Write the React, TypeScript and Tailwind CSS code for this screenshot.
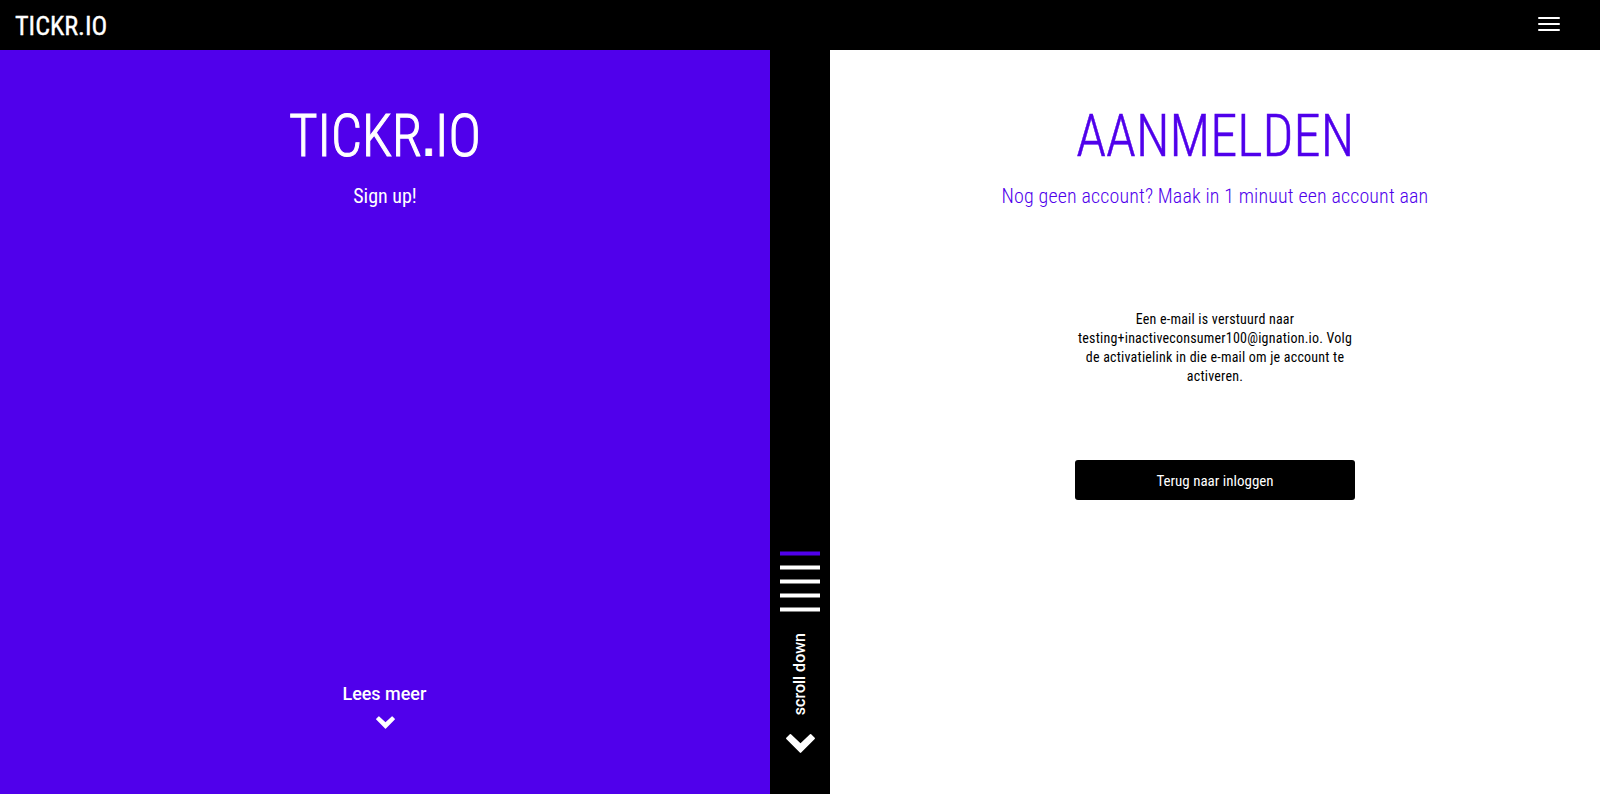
const bars = [11.5, 25.5, 39.5, 53.5, 67.5];

function Chevron({ className }: { className: string }) {
  return (
    <svg viewBox="0 0 29 19" className={className} fill="currentColor" aria-hidden="true">
      <path d="M5 0.3 14.5 9.3 24 0.3Q24.6 -0.2 25.2 0.3L28.7 3.8Q29.2 4.4 28.7 5L15.2 18.6Q14.5 19.2 13.8 18.6L0.3 5Q-0.2 4.4 0.3 3.8L3.8 0.3Q4.4 -0.2 5 0.3Z" />
    </svg>
  );
}

function Header() {
  return (
    <header className="flex h-[50px] shrink-0 items-center justify-between bg-black pr-10 pl-[15px] text-white">
      <a href="#" className="origin-left scale-x-[0.98] pt-[3px] text-[26.7px] leading-none font-normal [-webkit-text-stroke:0.35px_white]">TICKR.IO</a>
      <button aria-label="Menu" className="-mt-[2px] flex h-[14px] w-[22px] flex-col justify-between">
        <span className="h-[2px] w-full rounded-[1px] bg-white" />
        <span className="h-[2px] w-full rounded-[1px] bg-white" />
        <span className="h-[2px] w-full rounded-[1px] bg-white" />
      </button>
    </header>
  );
}

export default function App() {
  return (
    <div className="flex h-[794px] flex-col overflow-hidden font-['Roboto',sans-serif] [font-stretch:75%]">
      <Header />
      <main className="grid min-h-0 flex-1 grid-cols-[1fr_60px_1fr]">
        <section className="flex flex-col items-center bg-[#5000eb] pt-[56px] text-white">
          <h1 className="h-[60px] origin-center scale-x-[0.915] text-[60px] leading-[60px] font-light [-webkit-text-stroke:1.1px_white]">
            TICKR<span className="font-['Liberation_Sans',sans-serif] text-[50px] leading-none font-bold [-webkit-text-stroke:0]">.</span>IO
          </h1>
          <p className="mt-[15px] text-[20px] leading-[30px] font-normal">Sign up!</p>
          <a href="#" className="mt-auto flex flex-col items-center pb-[65px]">
            <span className="-ml-px scale-x-[0.945] text-[19px] leading-[28px] font-medium [font-stretch:100%]">Lees meer</span>
            <Chevron className="mt-[8px] h-[13px] w-[19px]" />
          </a>
        </section>

        <aside className="flex flex-col items-center justify-end bg-black pb-[41px] text-white">
          <svg width="40" height="80" viewBox="0 0 40 80" aria-hidden="true">
            {bars.map((y, i) => (
              <rect key={y} x="0" y={y} width="40" height="4" fill={i === 0 ? "#5000eb" : "#ffffff"} />
            ))}
          </svg>
          <span className="mt-[13px] rotate-180 text-[16px] leading-[20px] font-medium [font-stretch:100%] [writing-mode:vertical-rl]">
            scroll down
          </span>
          <Chevron className="mt-[19px] h-[19px] w-[29px]" />
        </aside>

        <section className="flex flex-col items-center bg-white pt-[56px] text-[#5000eb]">
          <h2 className="origin-center scale-x-[0.907] text-[60px] leading-[60px] font-light [-webkit-text-stroke:0.5px_#5000eb]">AANMELDEN</h2>
          <p className="mt-[15px] text-[20px] leading-[30px] font-light tracking-[0.14px]">
            Nog geen account? Maak in 1 minuut een account aan
          </p>
          <p className="mt-[99px] w-[280px] text-center text-[14px] leading-[19px] tracking-[0.21px] text-black">
            Een e-mail is verstuurd naar testing+inactiveconsumer100@ignation.io. Volg de activatielink in die e-mail om je account te activeren.
          </p>
          <button className="mt-[74px] h-10 w-[280px] rounded-[3px] bg-black pt-[2px] text-[15px] text-white">
            Terug naar inloggen
          </button>
        </section>
      </main>
    </div>
  );
}
